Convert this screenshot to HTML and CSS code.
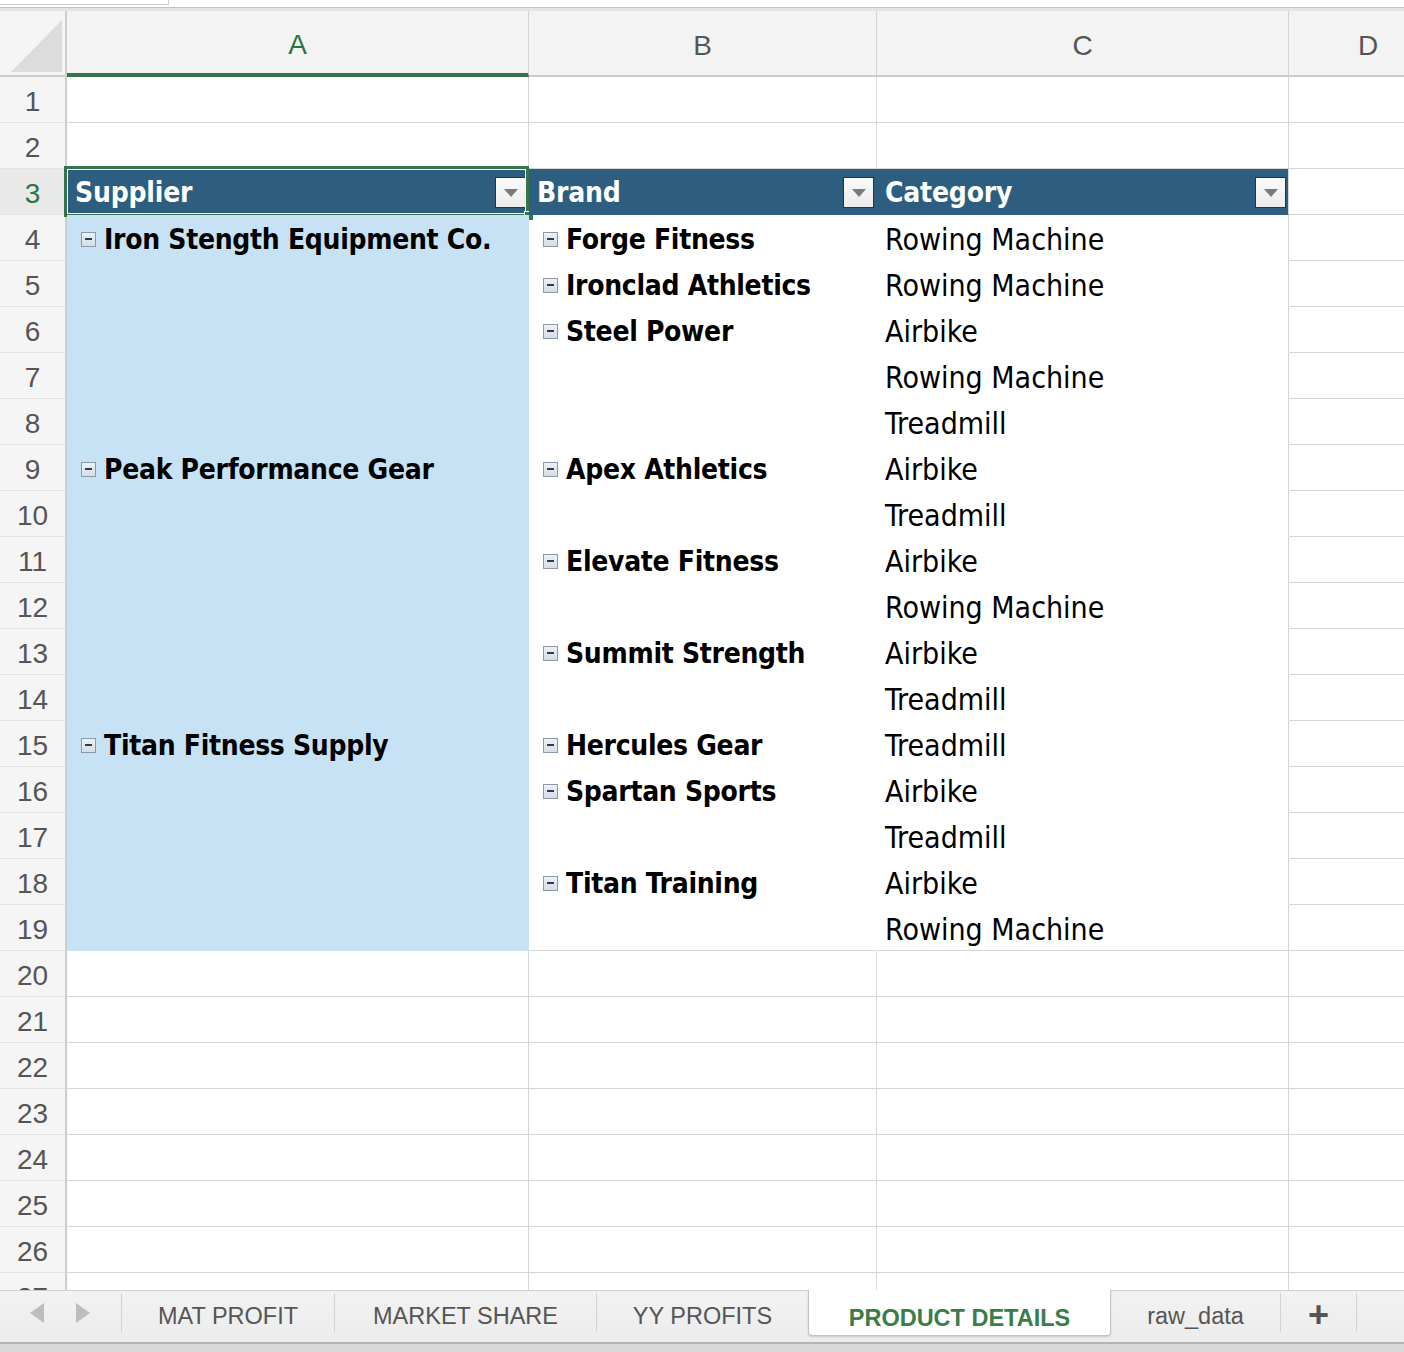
FILE: index.html
```html
<!DOCTYPE html>
<html>
<head>
<meta charset="utf-8">
<link rel="stylesheet" href="styles.css">
</head>
<body>
<div class="sheet">
  <div class="topstrip"><div class="namebox"></div></div>
  <div class="row colhead">
    <div class="corner"><div class="tri"></div></div>
    <div class="ch sel">A</div>
    <div class="ch">B</div>
    <div class="ch">C</div>
    <div class="ch last">D</div>
  </div>

  <div class="row"><div class="rh">1</div><div class="c"></div><div class="c"></div><div class="c"></div><div class="c"></div></div>
  <div class="row"><div class="rh">2</div><div class="c"></div><div class="c"></div><div class="c"></div><div class="c"></div></div>
  <div class="row">
    <div class="rh act">3</div>
    <div class="c hdr hdrA"><span>Supplier</span><span class="dd"></span><div class="selbox"></div><div class="handle"></div></div>
    <div class="c hdr"><span>Brand</span><span class="dd"></span></div>
    <div class="c hdr"><span>Category</span><span class="dd"></span></div>
    <div class="c"></div>
  </div>
  <div class="row"><div class="rh">4</div><div class="c pa"><span class="tg"></span>Iron Stength Equipment Co.</div><div class="c pb"><span class="tg"></span>Forge Fitness</div><div class="c pc">Rowing Machine</div><div class="c"></div></div>
  <div class="row"><div class="rh">5</div><div class="c pa"></div><div class="c pb"><span class="tg"></span>Ironclad Athletics</div><div class="c pc">Rowing Machine</div><div class="c"></div></div>
  <div class="row"><div class="rh">6</div><div class="c pa"></div><div class="c pb"><span class="tg"></span>Steel Power</div><div class="c pc">Airbike</div><div class="c"></div></div>
  <div class="row"><div class="rh">7</div><div class="c pa"></div><div class="c pb"></div><div class="c pc">Rowing Machine</div><div class="c"></div></div>
  <div class="row"><div class="rh">8</div><div class="c pa"></div><div class="c pb"></div><div class="c pc">Treadmill</div><div class="c"></div></div>
  <div class="row"><div class="rh">9</div><div class="c pa"><span class="tg"></span>Peak Performance Gear</div><div class="c pb"><span class="tg"></span>Apex Athletics</div><div class="c pc">Airbike</div><div class="c"></div></div>
  <div class="row"><div class="rh">10</div><div class="c pa"></div><div class="c pb"></div><div class="c pc">Treadmill</div><div class="c"></div></div>
  <div class="row"><div class="rh">11</div><div class="c pa"></div><div class="c pb"><span class="tg"></span>Elevate Fitness</div><div class="c pc">Airbike</div><div class="c"></div></div>
  <div class="row"><div class="rh">12</div><div class="c pa"></div><div class="c pb"></div><div class="c pc">Rowing Machine</div><div class="c"></div></div>
  <div class="row"><div class="rh">13</div><div class="c pa"></div><div class="c pb"><span class="tg"></span>Summit Strength</div><div class="c pc">Airbike</div><div class="c"></div></div>
  <div class="row"><div class="rh">14</div><div class="c pa"></div><div class="c pb"></div><div class="c pc">Treadmill</div><div class="c"></div></div>
  <div class="row"><div class="rh">15</div><div class="c pa"><span class="tg"></span>Titan Fitness Supply</div><div class="c pb"><span class="tg"></span>Hercules Gear</div><div class="c pc">Treadmill</div><div class="c"></div></div>
  <div class="row"><div class="rh">16</div><div class="c pa"></div><div class="c pb"><span class="tg"></span>Spartan Sports</div><div class="c pc">Airbike</div><div class="c"></div></div>
  <div class="row"><div class="rh">17</div><div class="c pa"></div><div class="c pb"></div><div class="c pc">Treadmill</div><div class="c"></div></div>
  <div class="row"><div class="rh">18</div><div class="c pa"></div><div class="c pb"><span class="tg"></span>Titan Training</div><div class="c pc">Airbike</div><div class="c"></div></div>
  <div class="row"><div class="rh">19</div><div class="c pa"></div><div class="c pb pl"></div><div class="c pc pl">Rowing Machine</div><div class="c"></div></div>
  <div class="row"><div class="rh">20</div><div class="c"></div><div class="c"></div><div class="c"></div><div class="c"></div></div>
  <div class="row"><div class="rh">21</div><div class="c"></div><div class="c"></div><div class="c"></div><div class="c"></div></div>
  <div class="row"><div class="rh">22</div><div class="c"></div><div class="c"></div><div class="c"></div><div class="c"></div></div>
  <div class="row"><div class="rh">23</div><div class="c"></div><div class="c"></div><div class="c"></div><div class="c"></div></div>
  <div class="row"><div class="rh">24</div><div class="c"></div><div class="c"></div><div class="c"></div><div class="c"></div></div>
  <div class="row"><div class="rh">25</div><div class="c"></div><div class="c"></div><div class="c"></div><div class="c"></div></div>
  <div class="row"><div class="rh">26</div><div class="c"></div><div class="c"></div><div class="c"></div><div class="c"></div></div>
  <div class="row"><div class="rh">27</div><div class="c"></div><div class="c"></div><div class="c"></div><div class="c"></div></div>
</div>

<div class="tabbar">
  <div class="nav"><span class="arr left"></span><span class="arr right"></span></div>
  <div class="tab t1">MAT PROFIT</div>
  <div class="tab t2">MARKET SHARE</div>
  <div class="tab t3">YY PROFITS</div>
  <div class="tab active">PRODUCT DETAILS</div>
  <div class="tab lower">raw_data</div>
  <div class="tab plus">+</div>
</div>
<div class="bottomstrip"></div>
</body>
</html>
```

FILE: styles.css
```css
* { box-sizing: border-box; }
html, body { margin: 0; padding: 0; }
body {
  width: 1404px;
  height: 1352px;
  overflow: hidden;
  background: #fff;
  font-family: "Liberation Sans", Arial, sans-serif;
}

.sheet {
  height: 1290px;
  overflow: hidden;
}

.topstrip {
  height: 11px;
  background: #fff;
  border-bottom: 3px solid #e4e4e4;
  box-shadow: 0 -3px 0 -2px #c4c4c4 inset;
  position: relative;
}
.namebox {
  width: 169px;
  height: 5px;
  border-right: 1px solid #cfcfcf;
  border-bottom: 1px solid #cfcfcf;
}

.row {
  display: grid;
  grid-template-columns: 67px 462px 348px 412px 158px;
  height: 46px;
}

.colhead {
  height: 66px;
  background: #f3f3f3;
}
.corner {
  border-right: 2px solid #cdcdcd;
  border-bottom: 2px solid #cdcdcd;
  position: relative;
  background: #f5f5f5;
}
.tri {
  position: absolute;
  left: 11px;
  top: 9px;
  width: 51px;
  height: 52px;
  background: #dcdcdc;
  clip-path: polygon(100% 0, 100% 100%, 0 100%);
}
.ch {
  display: flex;
  align-items: center;
  justify-content: center;
  font-size: 28px;
  color: #555;
  border-right: 1px solid #d4d4d4;
  border-bottom: 2px solid #cdcdcd;
  padding-top: 5px;
}
.ch.last { border-right: none; }
.ch.sel {
  color: #2e7344;
  border-bottom: 4px solid #357449;
}

.rh {
  display: flex;
  align-items: center;
  justify-content: center;
  font-size: 28px;
  color: #555;
  background: #f5f5f5;
  border-right: 2px solid #cdcdcd;
  border-bottom: 1px solid #e3e3e3;
  padding-top: 4px;
}
.rh.act {
  color: #2e7344;
  background: #e9e9e9;
}

.c {
  border-right: 1px solid #d6d6d6;
  border-bottom: 1px solid #d6d6d6;
  display: flex;
  align-items: center;
  font-family: "DejaVu Sans Condensed", "DejaVu Sans", sans-serif;
  font-size: 30px;
  color: #000;
  white-space: nowrap;
  position: relative;
  padding-top: 3px;
}

.hdr {
  background: #2d5e80;
  border-right-color: #2d5e80;
  border-bottom-color: #2d5e80;
  color: #fff;
  font-weight: bold;
  font-size: 28px;
  letter-spacing: -0.2px;
  padding-left: 8px;
  justify-content: space-between;
  padding-right: 2px;
  padding-top: 1px;
}
.hdr:nth-child(4) { border-right-color: #d6d6d6; }
.dd {
  width: 31px;
  height: 31px;
  background: linear-gradient(#fafafa, #ececec);
  border: 1px solid #1f3646;
  position: relative;
}
.dd::after {
  content: "";
  position: absolute;
  left: 8px;
  top: 11px;
  border-left: 7px solid transparent;
  border-right: 7px solid transparent;
  border-top: 8px solid #7a7a7a;
}
.selbox {
  position: absolute;
  left: -3px;
  top: -3px;
  right: -1px;
  bottom: -3px;
  border: 3px solid #377449;
  box-shadow: inset 0 0 0 1px #fff;
  pointer-events: none;
}
.handle {
  position: absolute;
  right: -6px;
  bottom: -7px;
  width: 10px;
  height: 10px;
  background: #377449;
  border: 1px solid #fff;
}

.pa {
  background: #c7e2f4;
  border-right-color: #c7e2f4;
  border-bottom-color: #c7e2f4;
  padding-left: 14px;
  font-weight: bold;
  font-size: 28px;
  letter-spacing: -0.3px;
}
.pb {
  border-right-color: #fff;
  border-bottom-color: #fff;
  padding-left: 14px;
  font-weight: bold;
  font-size: 28px;
  letter-spacing: -0.3px;
}
.pc {
  border-bottom-color: #fff;
  padding-left: 8px;
}
.pl { border-bottom-color: #d6d6d6; }

.tg {
  width: 15px;
  height: 15px;
  border: 1px solid #8c99ab;
  background: linear-gradient(#eef1f5, #d6dde6);
  margin-right: 8px;
  position: relative;
  flex: none;
}
.tg::after {
  content: "";
  position: absolute;
  left: 3px;
  top: 5px;
  width: 7px;
  height: 2px;
  background: #2c3a58;
}

.tabbar {
  height: 52px;
  background: linear-gradient(#f2f2f2, #ececec);
  border-top: 1px solid #cfcfcf;
  display: flex;
  align-items: stretch;
  font-family: "Liberation Sans", Arial, sans-serif;
}
.nav {
  width: 122px;
  display: flex;
  align-items: center;
  padding-left: 30px;
  gap: 32px;
  border-right: 1px solid #d2d2d2;
  margin: 2px 0 10px;
  flex: none;
}
.arr {
  width: 0;
  height: 0;
  border-top: 10px solid transparent;
  border-bottom: 10px solid transparent;
}
.arr.left { border-right: 14px solid #bdbdbd; }
.arr.right { border-left: 14px solid #bdbdbd; }
.tab {
  display: flex;
  align-items: center;
  justify-content: center;
  font-size: 23.5px;
  color: #555;
  border-right: 1px solid #d2d2d2;
  margin: 2px 0 10px;
  padding-top: 8px;
  flex: none;
  white-space: nowrap;
}
.t1 { width: 213px; }
.t2 { width: 262px; }
.t3 { width: 212px; }
.tab.active {
  background: #fff;
  color: #3b7d47;
  font-weight: bold;
  margin: -1px 0 6px -1px;
  border: 1px solid #c4c4c4;
  border-top: none;
  border-radius: 0 0 4px 4px;
  box-shadow: 0 1px 2px rgba(0,0,0,0.15);
  padding-top: 12px;
  width: 303px;
}
.tab.lower { width: 170px; }
.tab.plus { width: 76px; padding-top: 4px; font-size: 36px; font-weight: bold; color: #555; }

.bottomstrip {
  height: 10px;
  background: #d9d9d9;
  border-top: 2px solid #b4b4b4;
}
```
